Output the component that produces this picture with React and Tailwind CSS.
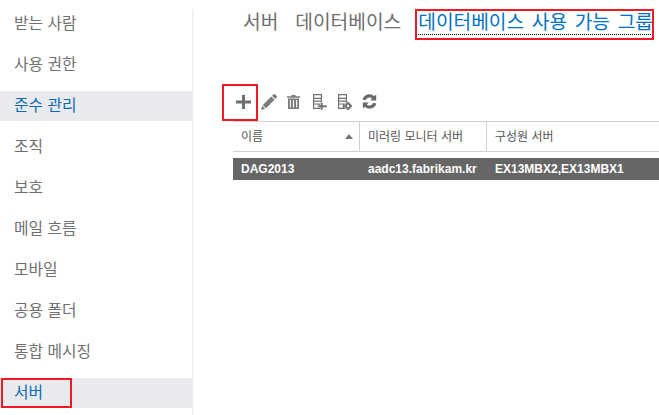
import React from 'react';

const navItems = ['받는 사람', '사용 권한', '준수 관리', '조직', '보호', '메일 흐름', '모바일', '공용 폴더', '통합 메시징', '서버'];
const selected = ['준수 관리', '서버'];

function PencilIcon() {
  return (
    <svg width="16" height="16" viewBox="0 0 16 16" fill="#7a7a7a">
      <path d="M12.2 0.6 C13 0 13.6 0 14.3 0.6 L15.4 1.7 C16 2.4 16 3 15.4 3.8 L14.2 5 L11 1.8 Z" />
      <path d="M10.3 2.5 L13.5 5.7 L5 14.2 L1.8 11 Z" />
      <path d="M1.2 11.8 L4.2 14.8 L0 16 Z" />
    </svg>
  );
}

function TrashIcon() {
  return (
    <svg width="13" height="14" viewBox="0 0 13 14" fill="#7a7a7a">
      <path d="M4.5 0h4v1.3h4.5v1.4H0V1.3h4.5z" />
      <path d="M1 3.6h11V14H1z M2.8 5v7.6h1.1V5z M5.9 5v7.6h1.2V5z M9.1 5v7.6h1.1V5z" fillRule="evenodd" />
    </svg>
  );
}

function ServerBase() {
  return (
    <path
      d="M0 0h9v15H0z M1.2 1.2v2.6h6.6V1.2z M1.2 5v1.6h6.6V5z M1.2 7.8v1.6h6.6V7.8z M1.2 10.6v3.2h3.6v-3.2z"
      fillRule="evenodd"
    />
  );
}

function ServerAddIcon() {
  return (
    <svg width="14" height="16" viewBox="0 0 14 16" fill="#707070">
      <ServerBase />
      <path d="M7.5 8.5h2.4v2.6H14v2.4H9.9V16H7.5v-2.5H5v-2.4h2.5z" stroke="#fff" strokeWidth="0.5" />
    </svg>
  );
}

function ServerGearIcon() {
  return (
    <svg width="14" height="16" viewBox="0 0 14 16" fill="#707070">
      <ServerBase />
      <circle cx="10" cy="12" r="3.6" stroke="#fff" strokeWidth="0.6" />
      <path d="M9.2 7.8h1.6v1.4H9.2z M9.2 14.8h1.6V16H9.2z M5.8 11.2h1.3v1.6H5.8z M12.9 11.2H14v1.6h-1.1z" />
      <circle cx="10" cy="12" r="1.2" fill="#fff" />
    </svg>
  );
}

function RefreshIcon() {
  return (
    <svg width="15" height="15" viewBox="0 0 15 15" fill="#6a6a6a">
      <path d="M7.5 0.3 C9.5 0.3 11 1.1 12.1 2.3 L14.2 0.4 V6.6 H8.2 L10.1 4.6 C9.5 3.9 8.6 3.4 7.5 3.4 C5.8 3.4 4.4 4.4 3.9 6.2 L0.6 5.5 C1.4 2.4 4.2 0.3 7.5 0.3 Z" />
      <path d="M7.5 14.7 C5.5 14.7 4 13.9 2.9 12.7 L0.8 14.6 V8.4 H6.8 L4.9 10.4 C5.5 11.1 6.4 11.6 7.5 11.6 C9.2 11.6 10.6 10.6 11.1 8.8 L14.4 9.5 C13.6 12.6 10.8 14.7 7.5 14.7 Z" />
    </svg>
  );
}

export default function App() {
  return (
    <div className="flex h-[415px] w-[659px] overflow-hidden bg-white font-['Liberation_Sans','Noto_Sans_CJK_KR',sans-serif]">
      <div className="mt-[9px] h-[406px] w-[194px] shrink-0 border-r-[2px] border-[#f1f1f3]">
        <div className="flex flex-col gap-[11px]">
          {navItems.map((item) => {
            const isSelected = selected.includes(item);
            return (
              <div
                key={item}
                className={`relative flex h-[30px] items-center pl-[14px] text-[15.8px] ${
                  isSelected ? 'bg-[#e9eaed] text-[#0a6cb4]' : 'text-[#707070]'
                }`}
              >
                {item}
                {item === '서버' && (
                  <div className="absolute left-[1px] top-0 h-[30px] w-[71px] border-2 border-[#ed1c24]" />
                )}
              </div>
            );
          })}
        </div>
      </div>

      <div className="min-w-0 flex-1 pl-[28px]">
        <div className="flex h-[41px] items-start pl-[21px] pt-[10px] text-[19.2px] leading-[26px] whitespace-nowrap text-[#6e6e6e]">
          <span>서버</span>
          <span className="ml-[17px]">데이터베이스</span>
          <span className="relative ml-[17px] text-[#0072c6] [word-spacing:2.3px]">
            <span className="inline-block h-[25px] border-b border-dotted border-black">데이터베이스 사용 가능 그룹</span>
            <span className="absolute -top-[1px] -left-[3px] -right-[1px] h-[31px] border-2 border-[#ed1c24]" />
          </span>
        </div>

        <div className="mt-[43px] flex h-[37px] w-fit items-center">
          <div className="relative flex h-[37px] w-[36px] items-center pb-[2px] pl-[14px]">
            <svg width="15" height="14" viewBox="0 0 15 14" fill="#6f6f6f">
              <path d="M6 0h3v5.5h6v3H9V14H6V8.5H0v-3h6z" />
            </svg>
            <div className="absolute inset-0 border-2 border-[#ed1c24]" />
          </div>
          <div className="ml-[3px] flex items-center pb-[2px]">
            <PencilIcon />
            <div className="ml-[10px]"><TrashIcon /></div>
            <div className="ml-[13px]"><ServerAddIcon /></div>
            <div className="ml-[11px]"><ServerGearIcon /></div>
            <div className="ml-[10px]"><RefreshIcon /></div>
          </div>
        </div>

        <div className="ml-[11px] flex h-[31px] items-center border-y border-[#d0d0d0] text-[12px] text-[#555555]">
          <div className="flex h-full w-[127px] items-center justify-between border-r border-[#d0d0d0] pr-[6px] pl-[8px]">
            <span>이름</span>
            <span className="h-0 w-0 border-x-[4px] border-b-[5px] border-x-transparent border-b-[#777777]" />
          </div>
          <div className="flex h-full w-[127px] items-center border-r border-[#d0d0d0] pl-[8px]">미러링 모니터 서버</div>
          <div className="pl-[8px]">구성원 서버</div>
        </div>

        <div className="mt-[6px] ml-[11px] flex h-[22px] items-center bg-[#666666] text-[12px] font-bold text-white">
          <div className="w-[127px] pl-[8px]">DAG2013</div>
          <div className="w-[127px] pl-[8px]">aadc13.fabrikam.kr</div>
          <div className="pl-[8px]">EX13MBX2,EX13MBX1</div>
        </div>
      </div>
    </div>
  );
}
